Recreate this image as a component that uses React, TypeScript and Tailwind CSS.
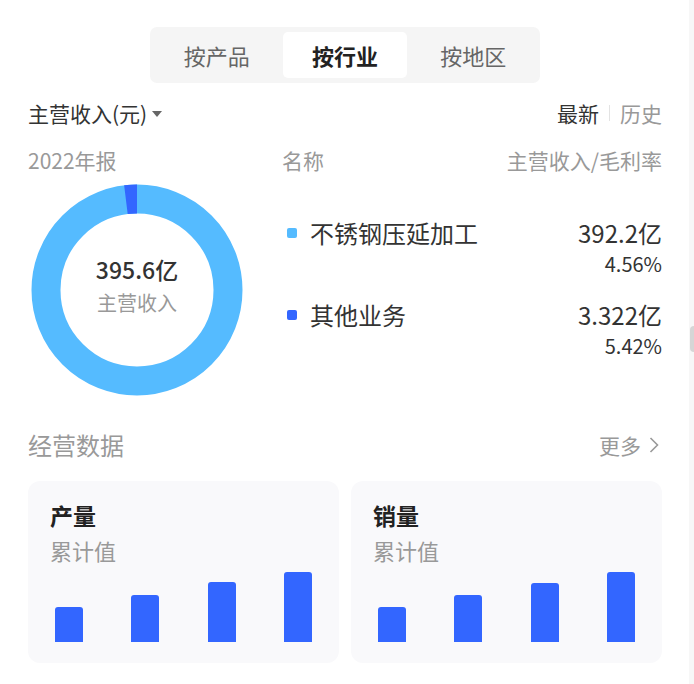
import React from "react";

const FONT = { fontFamily: '"Noto Sans CJK SC", "Noto Sans", sans-serif' };

function Donut() {
  return (
    <div className="relative w-[212px] h-[212px] ml-[3px]">
      <svg width="212" height="212" viewBox="0 0 212 212">
        <circle cx="106" cy="106" r="91" fill="none" stroke="#55bbff" strokeWidth="29" />
        <path d="M94.91 15.68 A91 91 0 0 1 106 15" fill="none" stroke="#3366ff" strokeWidth="29" />
      </svg>
      <div className="absolute inset-0 flex flex-col items-center justify-center">
        <div className="text-[23px] leading-[30px] font-medium text-[#333] mt-[-10px]">395.6亿</div>
        <div className="text-[20px] leading-[28px] text-[#999] mt-[5px]">主营收入</div>
      </div>
    </div>
  );
}

function LegendItem({ color, name, value, pct }: { color: string; name: string; value: string; pct: string }) {
  return (
    <div className="flex flex-col">
      <div className="flex items-center">
        <span className="w-[10px] h-[10px] rounded-[2px] ml-[5px]" style={{ backgroundColor: color }} />
        <span className="ml-[13px] text-[24px] leading-[32px] text-[#333]">{name}</span>
        <span className="ml-auto text-[24px] leading-[32px] text-[#333]">{value}</span>
      </div>
      <div className="text-right text-[20px] leading-[30px] text-[#333]">{pct}</div>
    </div>
  );
}

function Card({ title, heights }: { title: string; heights: number[] }) {
  return (
    <div className="bg-[#f9f9fb] rounded-[12px] pt-[19px] pb-[21px] px-[27px]">
      <div className="ml-[-5px]">
        <div className="text-[23px] leading-[30px] font-bold text-[#222]">{title}</div>
        <div className="text-[22px] leading-[30px] text-[#999] mt-[5px]">累计值</div>
      </div>
      <div className="h-[77px] flex items-end justify-between">
        {heights.map((h, i) => (
          <div key={i} className="w-[28px] bg-[#3366ff] rounded-t-[3px]" style={{ height: h }} />
        ))}
      </div>
    </div>
  );
}

export default function App() {
  return (
    <div className="relative w-[694px] h-[684px] bg-white overflow-hidden" style={FONT}>
      <div className="absolute right-0 top-0 bottom-0 w-[5px] bg-[#f7f7f7]">
        <div className="absolute left-[1px] top-[326px] w-[8px] h-[26px] rounded-full bg-[#d6d6d6]" />
      </div>
      <div className="pl-[28px] pr-[32px] flex flex-col">
        <div className="mt-[27px] self-center w-[390px] h-[56px] bg-[#f5f5f5] rounded-[7px] p-[5px] flex gap-[5px]">
          <div className="flex-1 flex items-center justify-center text-[22px] text-[#666]">按产品</div>
          <div className="flex-1 flex items-center justify-center text-[22px] font-bold text-[#222] bg-white rounded-[5px]">按行业</div>
          <div className="flex-1 flex items-center justify-center text-[22px] text-[#666]">按地区</div>
        </div>

        <div className="mt-[16px] flex items-center h-[28px]">
          <span className="text-[21px] leading-[28px] text-[#333]">主营收入(元)</span>
          <svg width="10" height="6" viewBox="0 0 10 6" className="ml-[5px] mt-[2px]">
            <path d="M0 0 L10 0 L5 6 Z" fill="#666" />
          </svg>
          <div className="ml-auto flex items-center text-[21px] leading-[28px]">
            <span className="text-[#333]">最新</span>
            <span className="mx-[10px] w-px h-[16px] bg-[#e3e3e3]" />
            <span className="text-[#999]">历史</span>
          </div>
        </div>

        <div className="mt-[19px] flex items-center h-[28px] text-[21px] leading-[28px] text-[#999]">
          <span className="w-[254px]">2022年报</span>
          <span>名称</span>
          <span className="ml-auto">主营收入/毛利率</span>
        </div>

        <div className="mt-[10px] flex">
          <Donut />
          <div className="ml-[39px] flex-1 flex flex-col gap-[20px] pt-[33px]">
            <LegendItem color="#55bbff" name="不锈钢压延加工" value="392.2亿" pct="4.56%" />
            <LegendItem color="#3366ff" name="其他业务" value="3.322亿" pct="5.42%" />
          </div>
        </div>

        <div className="mt-[34px] flex items-center h-[30px]">
          <span className="text-[24px] leading-[30px] text-[#999]">经营数据</span>
          <span className="ml-auto flex items-center text-[21px] leading-[30px] text-[#999]">
            更多
            <svg width="10" height="18" viewBox="0 0 10 18" className="ml-[8px] mr-[3px]">
              <path d="M1.5 2 L8.5 9 L1.5 16" fill="none" stroke="#999" strokeWidth="1.6" />
            </svg>
          </span>
        </div>

        <div className="mt-[21px] grid grid-cols-2 gap-[12px]">
          <Card title="产量" heights={[35, 47, 60, 70]} />
          <Card title="销量" heights={[35, 47, 59, 70]} />
        </div>
      </div>
    </div>
  );
}
